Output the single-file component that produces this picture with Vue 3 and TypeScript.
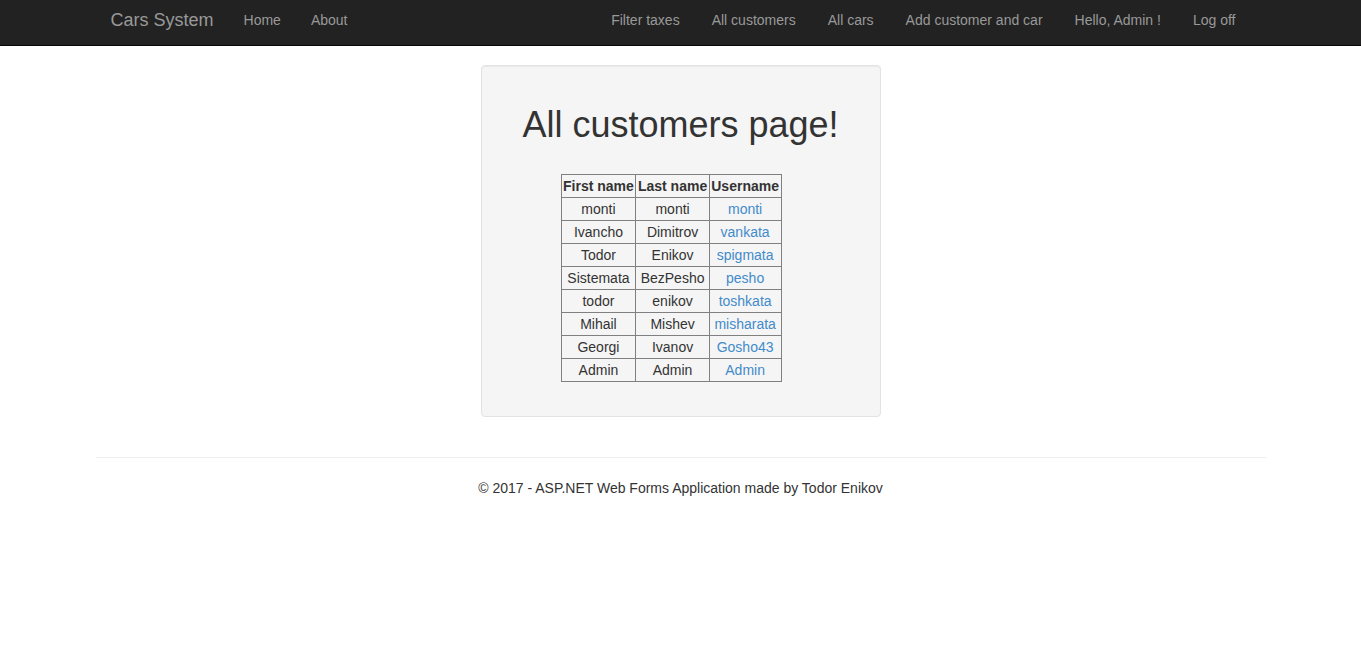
<script setup lang="ts">
interface Customer {
  first: string
  last: string
  username: string
}

const mainLinks: string[] = ['Home', 'About']
const userLinks: string[] = ['Filter taxes', 'All customers', 'All cars', 'Add customer and car', 'Hello, Admin !', 'Log off']

const customers: Customer[] = [
  { first: 'monti', last: 'monti', username: 'monti' },
  { first: 'Ivancho', last: 'Dimitrov', username: 'vankata' },
  { first: 'Todor', last: 'Enikov', username: 'spigmata' },
  { first: 'Sistemata', last: 'BezPesho', username: 'pesho' },
  { first: 'todor', last: 'enikov', username: 'toshkata' },
  { first: 'Mihail', last: 'Mishev', username: 'misharata' },
  { first: 'Georgi', last: 'Ivanov', username: 'Gosho43' },
  { first: 'Admin', last: 'Admin', username: 'Admin' },
]
</script>

<template>
  <header class="navbar">
    <nav class="container bar">
      <a class="brand" href="#">Cars System</a>
      <ul class="links">
        <li v-for="link in mainLinks" :key="link"><a href="#">{{ link }}</a></li>
      </ul>
      <ul class="links user">
        <li v-for="link in userLinks" :key="link"><a href="#">{{ link }}</a></li>
      </ul>
    </nav>
  </header>
  <div class="container content">
    <main class="well">
      <h1>All customers page!</h1>
      <table>
        <thead>
          <tr>
            <th scope="col">First name</th>
            <th scope="col">Last name</th>
            <th scope="col">Username</th>
          </tr>
        </thead>
        <tbody>
          <tr v-for="c in customers" :key="c.username">
            <td>{{ c.first }}</td>
            <td>{{ c.last }}</td>
            <td><a href="#">{{ c.username }}</a></td>
          </tr>
        </tbody>
      </table>
    </main>
    <hr />
    <footer>© 2017 - ASP.NET Web Forms Application made by Todor Enikov</footer>
  </div>
</template>

<style>
body {
  margin: 0;
  background: #fff;
  color: #333;
  font: 14px/20px "Liberation Sans", Arial, sans-serif;
}
</style>

<style scoped>
* {
  box-sizing: border-box;
}
a {
  color: #428bca;
  text-decoration: none;
}
.container {
  max-width: 1170px;
  margin: 0 auto;
}
.navbar {
  background: #222;
  border-bottom: 1px solid #080808;
}
.bar {
  display: flex;
  min-height: 45px;
  padding: 0 15px;
}
.bar a {
  display: block;
  padding: 10px 15px;
  color: #999;
  white-space: nowrap;
}
.bar a:hover {
  color: #fff;
}
.bar .brand {
  padding-left: 0;
  font-size: 18px;
}
.links {
  display: flex;
  margin: 0;
  padding: 0;
  list-style: none;
}
.user {
  gap: 2px;
  margin-left: auto;
}
.content {
  padding-top: 19px;
}
.well {
  width: 400px;
  max-width: 100%;
  margin: 0 auto 40px;
  padding: 19px 39px 34px;
  border: 1px solid #e3e3e3;
  border-radius: 4px;
  background: #f5f5f5;
  box-shadow: inset 0 1px 1px rgba(0, 0, 0, 0.05);
}
h1 {
  margin: 20px 0 29px;
  font-size: 36px;
  font-weight: 500;
  line-height: 40px;
  text-align: center;
}
table {
  width: 221px;
  margin-left: 40px;
  border: 1px solid #808080;
  border-collapse: collapse;
  text-align: center;
}
th,
td {
  padding: 1px;
  border: 1px solid #808080;
  white-space: nowrap;
}
hr {
  height: 1px;
  margin: 0 0 20px;
  border: 0;
  background: #eee;
}
footer {
  text-align: center;
}
</style>
